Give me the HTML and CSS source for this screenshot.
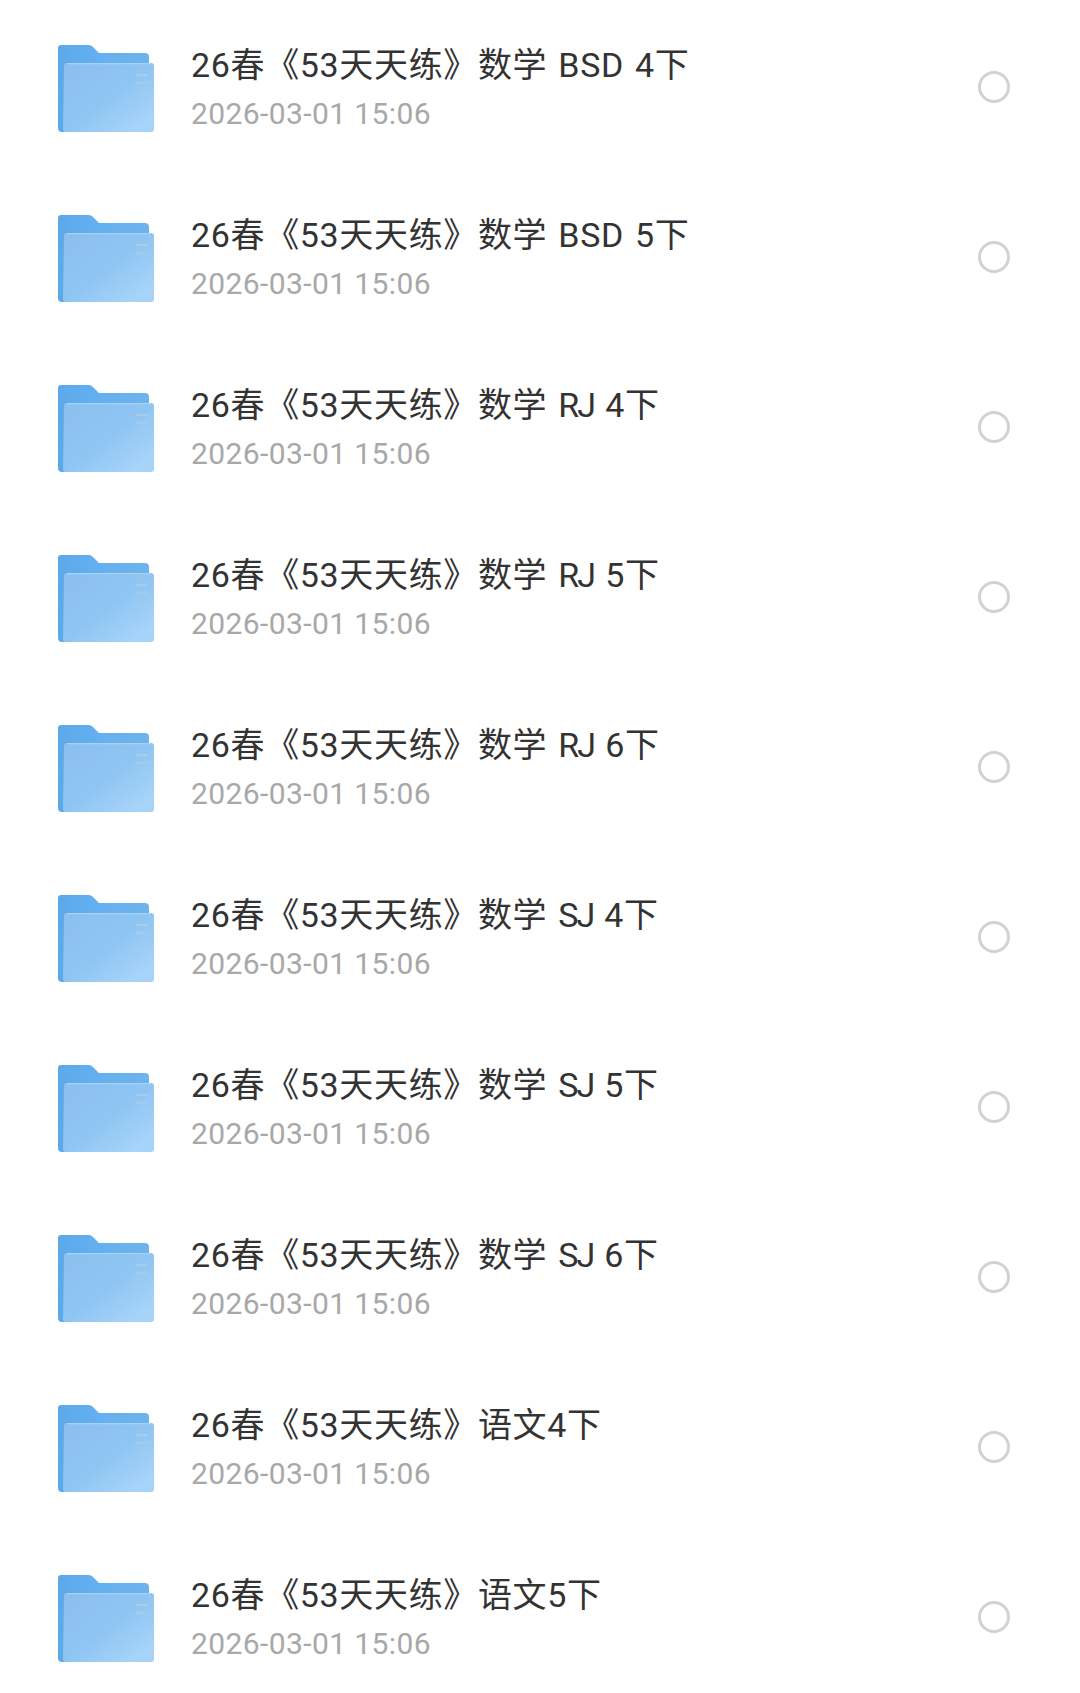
FILE: index.html
```html
<!DOCTYPE html>
<html lang="zh-CN">
<head>
<meta charset="utf-8">
<title>文件列表</title>
<link rel="stylesheet" href="styles.css">
</head>
<body>
<svg class="defs" width="0" height="0" aria-hidden="true">
  <defs>
    <linearGradient id="back" x1="0" y1="0" x2="1" y2="0"><stop offset="0" stop-color="#5ca9ea"/><stop offset="0.5" stop-color="#65b0f0"/><stop offset="1" stop-color="#6eb3ec"/></linearGradient>
    <linearGradient id="front" x1="0" y1="0" x2="1" y2="1"><stop offset="0" stop-color="#8bbfee"/><stop offset="0.5" stop-color="#8fc5f3"/><stop offset="0.9" stop-color="#a8d4f9"/><stop offset="1" stop-color="#a6d1f5"/></linearGradient>
    <filter id="soft" x="-5%" y="-5%" width="110%" height="110%"><feGaussianBlur stdDeviation="0.6"/></filter>
    <symbol id="folder" viewBox="0 0 96 88">
      <g filter="url(#soft)">
        <path d="M3 0H31Q33 0 35 2L41 8H87Q91 8 91 12V24H8V87H4Q0 87 0 83V3Q0 0 3 0Z" fill="url(#back)"/>
        <path d="M9 18H93Q96 18 96 21V84Q96 87 93 87H8Q5 87 5 84L6 21Q6 18 9 18Z" fill="url(#front)"/>
        <path d="M9 18.6H93" stroke="#a8d2f6" stroke-width="1.2" fill="none"/>
        <path d="M78 30H89M78 38H89" stroke="#a8cbe8" stroke-width="2.4" fill="none"/>
      </g>
    </symbol>
  </defs>
</svg>
<ul class="list">
  <li class="row"><svg class="folder"><use href="#folder"/></svg><div class="info"><div class="title">26春《53天天练》数学 BSD 4下</div><div class="time">2026-03-01 15:06</div></div><span class="radio"></span></li>
  <li class="row"><svg class="folder"><use href="#folder"/></svg><div class="info"><div class="title">26春《53天天练》数学 BSD 5下</div><div class="time">2026-03-01 15:06</div></div><span class="radio"></span></li>
  <li class="row"><svg class="folder"><use href="#folder"/></svg><div class="info"><div class="title">26春《53天天练》数学 <span class="tight">RJ</span> 4下</div><div class="time">2026-03-01 15:06</div></div><span class="radio"></span></li>
  <li class="row"><svg class="folder"><use href="#folder"/></svg><div class="info"><div class="title">26春《53天天练》数学 <span class="tight">RJ</span> 5下</div><div class="time">2026-03-01 15:06</div></div><span class="radio"></span></li>
  <li class="row"><svg class="folder"><use href="#folder"/></svg><div class="info"><div class="title">26春《53天天练》数学 <span class="tight">RJ</span> 6下</div><div class="time">2026-03-01 15:06</div></div><span class="radio"></span></li>
  <li class="row"><svg class="folder"><use href="#folder"/></svg><div class="info"><div class="title">26春《53天天练》数学 <span class="tight">SJ</span> 4下</div><div class="time">2026-03-01 15:06</div></div><span class="radio"></span></li>
  <li class="row"><svg class="folder"><use href="#folder"/></svg><div class="info"><div class="title">26春《53天天练》数学 <span class="tight">SJ</span> 5下</div><div class="time">2026-03-01 15:06</div></div><span class="radio"></span></li>
  <li class="row"><svg class="folder"><use href="#folder"/></svg><div class="info"><div class="title">26春《53天天练》数学 <span class="tight">SJ</span> 6下</div><div class="time">2026-03-01 15:06</div></div><span class="radio"></span></li>
  <li class="row"><svg class="folder"><use href="#folder"/></svg><div class="info"><div class="title">26春《53天天练》语文4下</div><div class="time">2026-03-01 15:06</div></div><span class="radio"></span></li>
  <li class="row"><svg class="folder"><use href="#folder"/></svg><div class="info"><div class="title">26春《53天天练》语文5下</div><div class="time">2026-03-01 15:06</div></div><span class="radio"></span></li>
</ul>
</body>
</html>
```
FILE: styles.css
```css
* { box-sizing: border-box; }
html, body { margin: 0; height: 100%; background: #fff; overflow: hidden; }
body { font-family: Roboto, "Noto Sans CJK SC", sans-serif; padding-top: 2px; }
.defs { position: absolute; }
.list { list-style: none; margin: 0; padding: 0 0 0 58px; }
.row { height: 170px; display: flex; align-items: center; padding-right: 70px; }
.folder { width: 96px; height: 88px; flex: none; margin-top: 4px; }
.info { flex: 1; margin-left: 37px; display: flex; flex-direction: column; gap: 10px; padding-top: 1px; }
.title { font-size: 34px; line-height: 42px; color: #333; letter-spacing: 0.65px; word-spacing: 2px; }
.tight { letter-spacing: -2px; }
.time { font-size: 30px; line-height: 36px; color: #a8a8a8; letter-spacing: 0.4px; }
.radio { width: 32px; height: 32px; border: 3px solid #d2d2d2; border-radius: 50%; flex: none; }
```
